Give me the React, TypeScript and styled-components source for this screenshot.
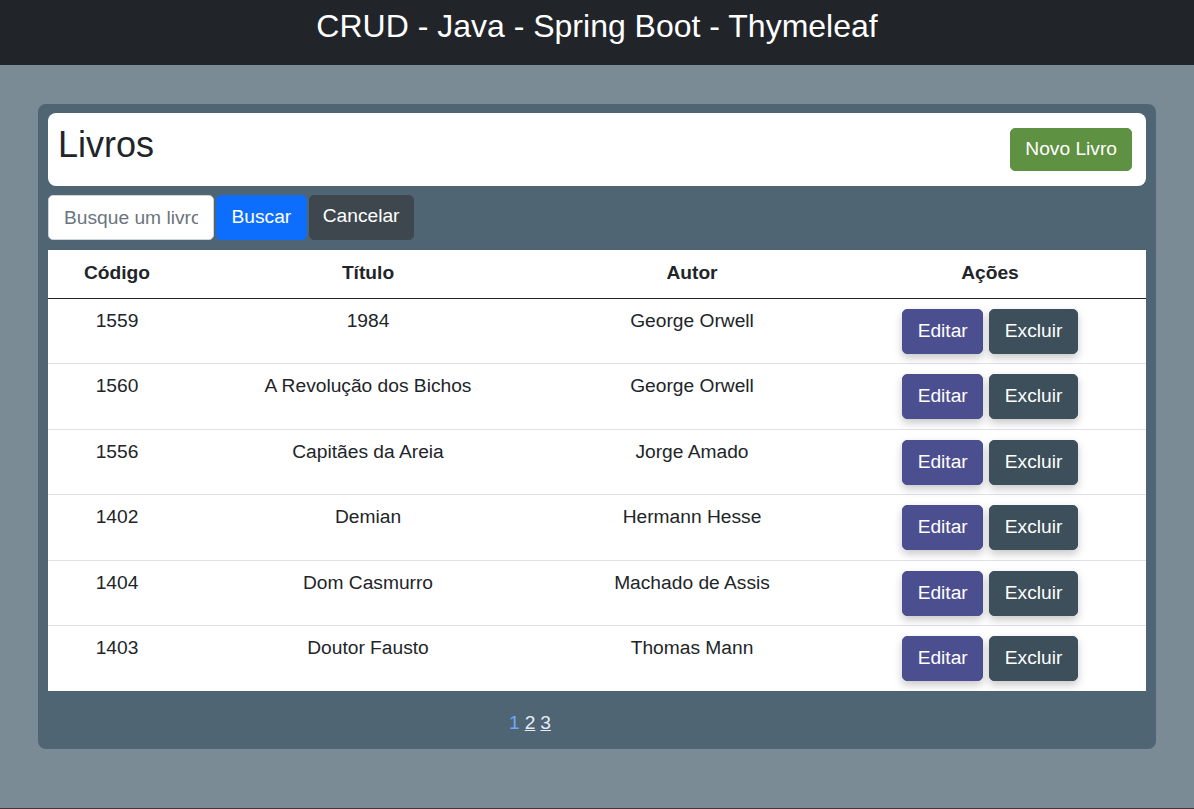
import React from "react";
import styled, { createGlobalStyle } from "styled-components";

const GlobalStyle = createGlobalStyle`
  html, body {
    margin: 0;
    padding: 0;
  }
  body {
    background: #7a8b96;
    font-family: "Liberation Sans", Arial, sans-serif;
    color: #212529;
  }
  * { box-sizing: border-box; }
`;

const Page = styled.div`
  min-height: 809px;
  display: flex;
  flex-direction: column;
  border-bottom: 1px solid #4a3338;
`;

const TopBar = styled.header`
  height: 65px;
  background: #212529;
  padding-top: 7px;
  text-align: center;
`;

const TopTitle = styled.h1`
  margin: 0;
  font-size: 32px;
  font-weight: 400;
  line-height: 1.2;
  color: #ffffff;
`;

const Main = styled.main`
  flex: 1;
  padding: 39px 38px 0;
`;

const Panel = styled.section`
  background: #4f6573;
  border-radius: 8px;
  padding: 9px 10px 11px;
  display: flex;
  flex-direction: column;
`;

const HeadCard = styled.div`
  background: #ffffff;
  border-radius: 8px;
  padding: 10px 14px 10px 10px;
  display: flex;
  justify-content: space-between;
  align-items: flex-start;
`;

const PageTitle = styled.h2`
  margin: 0 0 10px 0;
  font-size: 36px;
  font-weight: 400;
  line-height: 1.2;
  color: #212529;
`;

const Btn = styled.button<{ $bg: string; $shadow?: boolean }>`
  font-family: "Liberation Sans", Arial, sans-serif;
  font-size: 19.2px;
  line-height: 28.8px;
  color: #ffffff;
  background: ${(p) => p.$bg};
  border: 1px solid ${(p) => p.$bg};
  border-radius: 5px;
  padding: 7px 14px;
  cursor: pointer;
  white-space: nowrap;
  box-shadow: ${(p) => (p.$shadow ? "0 4px 8px rgba(0,0,0,0.22)" : "none")};
`;

const NewButton = styled(Btn)`
  align-self: center;
  height: 43px;
  padding: 6px 14px;
  margin-top: -10px;
  margin-bottom: -10px;
`;

const SearchRow = styled.form`
  display: flex;
  gap: 2px;
  margin-top: 9px;
  height: 45px;
`;

const SearchInput = styled.input`
  width: 166px;
  height: 45px;
  font-family: "Liberation Sans", Arial, sans-serif;
  font-size: 19.2px;
  padding: 7px 15px;
  border: 1px solid #ced4da;
  border-radius: 5px;
  background: #ffffff;
  color: #212529;
  &::placeholder {
    color: #6c757d;
  }
`;

const SearchButton = styled(Btn)`
  height: 45px;
  padding: 7px 14.5px;
`;

const CancelButton = styled(Btn)`
  height: 45px;
  padding: 6px 13px 8px;
`;

const Table = styled.table`
  margin-top: 10px;
  width: 100%;
  border-collapse: collapse;
  table-layout: fixed;
  background: #ffffff;
  font-size: 19.2px;
  line-height: 28.8px;
`;

const Th = styled.th<{ $w: number }>`
  width: ${(p) => p.$w}px;
  padding: 8.5px 9.6px 10.5px;
  text-align: center;
  font-weight: 700;
  border-bottom: 1px solid #212529;
`;

const Tr = styled.tr`
  border-bottom: 1px solid #dee2e6;
  &:last-child {
    border-bottom: none;
  }
`;

const Td = styled.td`
  padding: 8px 9.6px;
  text-align: center;
  vertical-align: top;
  color: #212529;
`;

const ActionCell = styled(Td)`
  padding: 9.7px 9.6px 9.8px;
`;

const Actions = styled.div`
  display: flex;
  justify-content: center;
  gap: 6px;
`;

const ActionButton = styled(Btn)`
  height: 45px;
  padding: 7px 14.5px;
`;

const Pager = styled.nav`
  margin-top: 18px;
  padding-left: 461px;
  font-size: 19.2px;
  line-height: 28.8px;
  display: flex;
  gap: 5px;
`;

const PageLink = styled.a<{ $active?: boolean }>`
  color: ${(p) => (p.$active ? "#6ea8fe" : "#e4eefb")};
  text-decoration: ${(p) => (p.$active ? "none" : "underline")};
  cursor: pointer;
`;

const books = [
  { id: 1559, title: "1984", author: "George Orwell" },
  { id: 1560, title: "A Revolução dos Bichos", author: "George Orwell" },
  { id: 1556, title: "Capitães da Areia", author: "Jorge Amado" },
  { id: 1402, title: "Demian", author: "Hermann Hesse" },
  { id: 1404, title: "Dom Casmurro", author: "Machado de Assis" },
  { id: 1403, title: "Doutor Fausto", author: "Thomas Mann" },
];

export default function App() {
  return (
    <Page>
      <GlobalStyle />
      <TopBar>
        <TopTitle>CRUD - Java - Spring Boot - Thymeleaf</TopTitle>
      </TopBar>
      <Main>
        <Panel>
          <HeadCard>
            <PageTitle>Livros</PageTitle>
            <NewButton $bg="#5f9142">Novo Livro</NewButton>
          </HeadCard>
          <SearchRow onSubmit={(e) => e.preventDefault()}>
            <SearchInput placeholder="Busque um livro" />
            <SearchButton $bg="#0d6efd">Buscar</SearchButton>
            <CancelButton $bg="#3e474e" type="button">Cancelar</CancelButton>
          </SearchRow>
          <Table>
            <thead>
              <tr>
                <Th $w={138}>Código</Th>
                <Th $w={364}>Título</Th>
                <Th $w={284}>Autor</Th>
                <Th $w={312}>Ações</Th>
              </tr>
            </thead>
            <tbody>
              {books.map((b) => (
                <Tr key={b.id}>
                  <Td>{b.id}</Td>
                  <Td>{b.title}</Td>
                  <Td>{b.author}</Td>
                  <ActionCell>
                    <Actions>
                      <ActionButton $bg="#4b4e8f" $shadow>Editar</ActionButton>
                      <ActionButton $bg="#3c4f5b" $shadow>Excluir</ActionButton>
                    </Actions>
                  </ActionCell>
                </Tr>
              ))}
            </tbody>
          </Table>
          <Pager>
            <PageLink $active>1</PageLink>
            <PageLink>2</PageLink>
            <PageLink>3</PageLink>
          </Pager>
        </Panel>
      </Main>
    </Page>
  );
}
